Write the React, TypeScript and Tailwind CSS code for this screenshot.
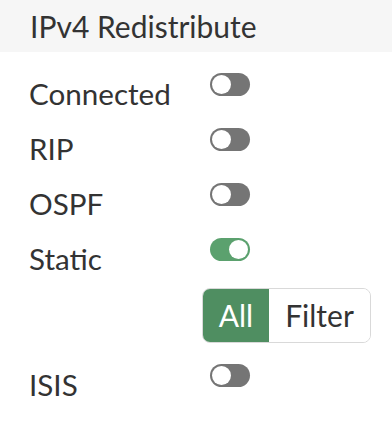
import { useState } from "react";

type Proto = "Connected" | "RIP" | "OSPF" | "Static" | "ISIS";

const Toggle = ({ on, onChange }: { on: boolean; onChange: () => void }) => (
  <button
    type="button"
    onClick={onChange}
    className={`mt-[7px] flex h-[23px] w-10 shrink-0 items-center rounded-full p-[2px] ${
      on ? "justify-end bg-[#5ba16e]" : "justify-start bg-[#757575]"
    }`}
  >
    <span className="block h-[19px] w-[19px] rounded-full bg-white" />
  </button>
);

const Row = ({
  label,
  on,
  onChange,
}: {
  label: string;
  on: boolean;
  onChange: () => void;
}) => (
  <div className="flex h-[55px] items-start">
    <span className="w-[181px] leading-[55px]">{label}</span>
    <Toggle on={on} onChange={onChange} />
  </div>
);

export default function App() {
  const [state, setState] = useState<Record<Proto, boolean>>({
    Connected: false,
    RIP: false,
    OSPF: false,
    Static: true,
    ISIS: false,
  });
  const [mode, setMode] = useState<"all" | "filter">("all");

  const flip = (p: Proto) => setState((prev) => ({ ...prev, [p]: !prev[p] }));

  return (
    <div className="h-[434px] w-[392px] bg-white font-['Lato',_'Open_Sans',_sans-serif] text-[#333333]">
      <div className="flex h-[52px] items-center bg-[#f6f6f6] px-[30px] text-[30px]">
        IPv4 Redistribute
      </div>
      <div className="mt-[14px] pl-[29px] text-[29.6px]">
        {(["Connected", "RIP", "OSPF", "Static"] as Proto[]).map((p) => (
          <Row key={p} label={p} on={state[p]} onChange={() => flip(p)} />
        ))}
        <div className="mt-[2px] flex pl-[173px]">
          <div className="flex h-[55px] shrink-0 overflow-hidden rounded-[8px] border border-[#d9d9d9] text-[30px]">
            <button
              type="button"
              onClick={() => setMode("all")}
              className={`w-[66px] shrink-0 ${
                mode === "all" ? "bg-[#4f8e61] text-white" : "bg-white text-[#333333]"
              }`}
            >
              All
            </button>
            <button
              type="button"
              onClick={() => setMode("filter")}
              className={`w-[101px] shrink-0 ${
                mode === "filter" ? "bg-[#4f8e61] text-white" : "bg-white text-[#333333]"
              }`}
            >
              Filter
            </button>
          </div>
        </div>
        <div className="mt-[14px]">
          <Row label="ISIS" on={state.ISIS} onChange={() => flip("ISIS")} />
        </div>
      </div>
    </div>
  );
}
